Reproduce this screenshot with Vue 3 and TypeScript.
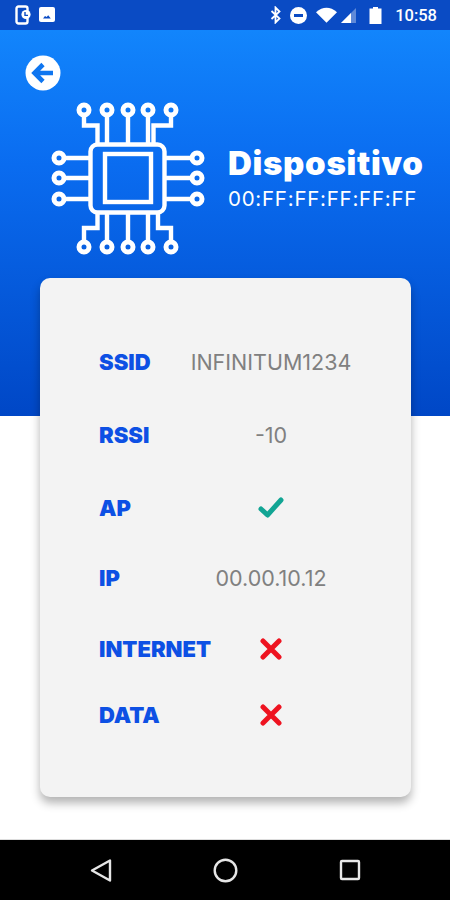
<script setup lang="ts">
interface InfoRow {
  label: string
  value?: string
  status?: 'ok' | 'fail'
}

const rows: InfoRow[] = [
  { label: 'SSID', value: 'INFINITUM1234' },
  { label: 'RSSI', value: '-10' },
  { label: 'AP', status: 'ok' },
  { label: 'IP', value: '00.00.10.12' },
  { label: 'INTERNET', status: 'fail' },
  { label: 'DATA', status: 'fail' },
]

const pinX = [84, 107, 128, 148, 171]
const pinY = [158, 178, 199]
</script>

<template>
  <div class="screen">
    <header class="status-bar">
      <div class="status-left">
        <svg width="18" height="20" viewBox="0 0 18 20" fill="none">
          <rect x="1.500" y="1.500" width="11" height="17" rx="2" stroke="#fff" stroke-width="2.400" />
          <circle cx="11" cy="9.500" r="4.600" fill="#fff" />
          <path d="M10 7v3.400h3" stroke="#0a4bc4" stroke-width="1.400" />
        </svg>
        <svg width="16" height="16" viewBox="0 0 16 16">
          <rect width="16" height="15" rx="2" fill="#fff" />
          <path d="M4 11.500l2-2.400 1.600 1 1.600-1.800 2.600 3.200z" fill="#0a4bc4" />
        </svg>
      </div>
      <div class="status-right">
        <svg class="bt" width="12" height="18" viewBox="0 0 12 18" fill="none">
          <path d="M1.500 5l8 7.500-4 4V1.500l4 4-8 7.500" stroke="#fff" stroke-width="1.800" />
        </svg>
        <svg class="dnd" width="17" height="17" viewBox="0 0 17 17">
          <circle cx="8.500" cy="8.500" r="8.500" fill="#fff" />
          <rect x="4" y="7" width="9" height="3" fill="#0a4bc4" />
        </svg>
        <svg class="wifi" width="21" height="16" viewBox="0 0 22 16">
          <path d="M0 5Q11-4 22 5L11 16z" fill="#fff" />
        </svg>
        <svg class="signal" width="15" height="15" viewBox="0 0 15 15">
          <path d="M15 0v15H0z" fill="#fff" opacity=".35" />
          <path d="M10 5v10H0z" fill="#fff" />
        </svg>
        <svg class="battery" width="13" height="17" viewBox="0 0 12 17">
          <path d="M3.500 0h5v1.500H12V17H0V1.500h3.500z" fill="#fff" />
        </svg>
        <span class="clock">10:58</span>
      </div>
    </header>

    <main class="content">
      <section class="hero">
        <button class="back" type="button" aria-label="Volver">
          <svg width="36" height="36" viewBox="0 0 36 36" fill="none">
            <circle cx="18" cy="18" r="17.500" fill="#fff" />
            <path d="M28 18H11M18 9.500L9.500 18l8.500 8.500" stroke="#0f76f0" stroke-width="4.600" />
          </svg>
        </button>
        <div class="device">
          <svg class="chip" width="156" height="160" viewBox="50 100 156 160" fill="none" stroke="#fff" stroke-width="4.400">
            <rect x="90.500" y="144.500" width="74" height="68" rx="7" />
            <rect x="105" y="154" width="46" height="48" />
            <path d="M84 117v8.500h13.500V143M171 117v8.500h-17.500V143M107 117v26M128 117v26M148 117v26" />
            <path d="M84 240v-12h13.500v-14M171 240v-12h-13v-14M107 240v-26M128 240v-26M148 240v-26" />
            <path d="M66 158h23M66 178h23M66 199h23M190 158h-24M190 178h-24M190 199h-24" />
            <g stroke-width="5">
              <template v-for="x in pinX" :key="x">
                <circle :cx="x" cy="110" r="5" />
                <circle :cx="x" cy="247" r="5" />
              </template>
              <template v-for="y in pinY" :key="y">
                <circle cx="59" :cy="y" r="5" />
                <circle cx="197" :cy="y" r="5" />
              </template>
            </g>
          </svg>
          <div class="device-text">
            <h1>Dispositivo</h1>
            <p>00:FF:FF:FF:FF:FF</p>
          </div>
        </div>
      </section>

      <section class="card">
        <div v-for="row in rows" :key="row.label" class="row">
          <span class="label">{{ row.label }}</span>
          <span class="value">
            <template v-if="row.value">{{ row.value }}</template>
            <svg v-else-if="row.status === 'ok'" width="26" height="22" viewBox="0 0 26 22" fill="none">
              <path d="M3 12l6.500 6L23 3" stroke="#12a594" stroke-width="5" stroke-linejoin="round" stroke-linecap="round" />
            </svg>
            <svg v-else width="22" height="22" viewBox="0 0 22 22" fill="none">
              <path d="M3 3l16 16M19 3L3 19" stroke="#ee1320" stroke-width="5" stroke-linecap="round" />
            </svg>
          </span>
        </div>
      </section>
    </main>

    <nav class="nav-bar">
      <svg width="22" height="25" viewBox="0 0 22 25" fill="none">
        <path d="M20 2.500v20L2 12.500z" stroke="#e6e6e6" stroke-width="2.400" stroke-linejoin="round" />
      </svg>
      <svg width="25" height="25" viewBox="0 0 25 25" fill="none">
        <circle cx="12.500" cy="12.500" r="10.800" stroke="#e6e6e6" stroke-width="2.400" />
      </svg>
      <svg width="22" height="22" viewBox="0 0 22 22" fill="none">
        <rect x="2" y="2" width="18" height="18" rx="1" stroke="#e6e6e6" stroke-width="2.400" />
      </svg>
    </nav>
  </div>
</template>

<style>
html, body { margin: 0; background: #fff; }
</style>

<style scoped>
.screen {
  width: 450px;
  height: 900px;
  display: flex;
  flex-direction: column;
  overflow: hidden;
  font-family: Inter, "Liberation Sans", sans-serif;
}

.status-bar {
  height: 30px;
  flex: none;
  background: #0a4bc4;
  display: flex;
  align-items: center;
  justify-content: space-between;
  padding: 0 13px 0 15px;
  color: #fff;
}
.status-left { display: flex; align-items: center; gap: 6px; }
.status-right { display: flex; align-items: center; }
.dnd { margin-left: 8px; }
.wifi { margin-left: 9px; }
.signal { margin-left: 4px; }
.battery { margin-left: 13px; }
.clock {
  margin-left: 13px;
  font: 500 16.500px Roboto, sans-serif;
}

.content {
  flex: 1;
  background: #fff;
  box-shadow: inset 0 -1px 0 #ddd;
}

.hero {
  height: 386px;
  box-sizing: border-box;
  padding: 25px 0 0 25px;
  background: linear-gradient(180deg, #1285fc 0%, #0a6cf0 35%, #0047c6 100%);
}
.back {
  display: block;
  width: 36px;
  height: 36px;
  padding: 0;
  border: 0;
  background: none;
}
.device {
  display: flex;
  align-items: center;
  margin: 9px 0 0 25px;
}
.chip { flex: none; }
.device-text { margin: -4px 0 0 22px; color: #fff; }
.device-text h1 {
  margin: 0;
  font-size: 33px;
  line-height: 36px;
  font-weight: 900;
  letter-spacing: 0.700px;
  white-space: nowrap;
}
.device-text p {
  margin: 6px 0 0;
  font-size: 20.500px;
  line-height: 24px;
  font-weight: 400;
  letter-spacing: 0.750px;
  white-space: nowrap;
}

.card {
  position: relative;
  box-sizing: border-box;
  width: 371px;
  height: 519px;
  margin: -138px 0 0 40px;
  padding: 47px 0 0 59px;
  border-radius: 10px;
  background: #f3f3f3;
  box-shadow: 0 6px 10px rgba(0, 0, 0, 0.3);
}
.row {
  display: grid;
  grid-template-columns: 92px 160px;
  align-items: center;
  height: 73px;
}
.row:nth-child(4) { height: 67px; }
.row:nth-child(5) { height: 75px; }
.row:nth-child(6) { height: 57px; }
.label {
  white-space: nowrap;
  color: #0d50e4;
  font-size: 22px;
  font-weight: 900;
}
.value {
  display: flex;
  justify-content: center;
  align-items: center;
  white-space: nowrap;
  color: #808080;
  font-size: 21.500px;
}

.nav-bar {
  height: 60px;
  flex: none;
  background: #000;
  display: flex;
  align-items: center;
  justify-content: space-between;
  padding: 0 89px 0 90px;
}
</style>
